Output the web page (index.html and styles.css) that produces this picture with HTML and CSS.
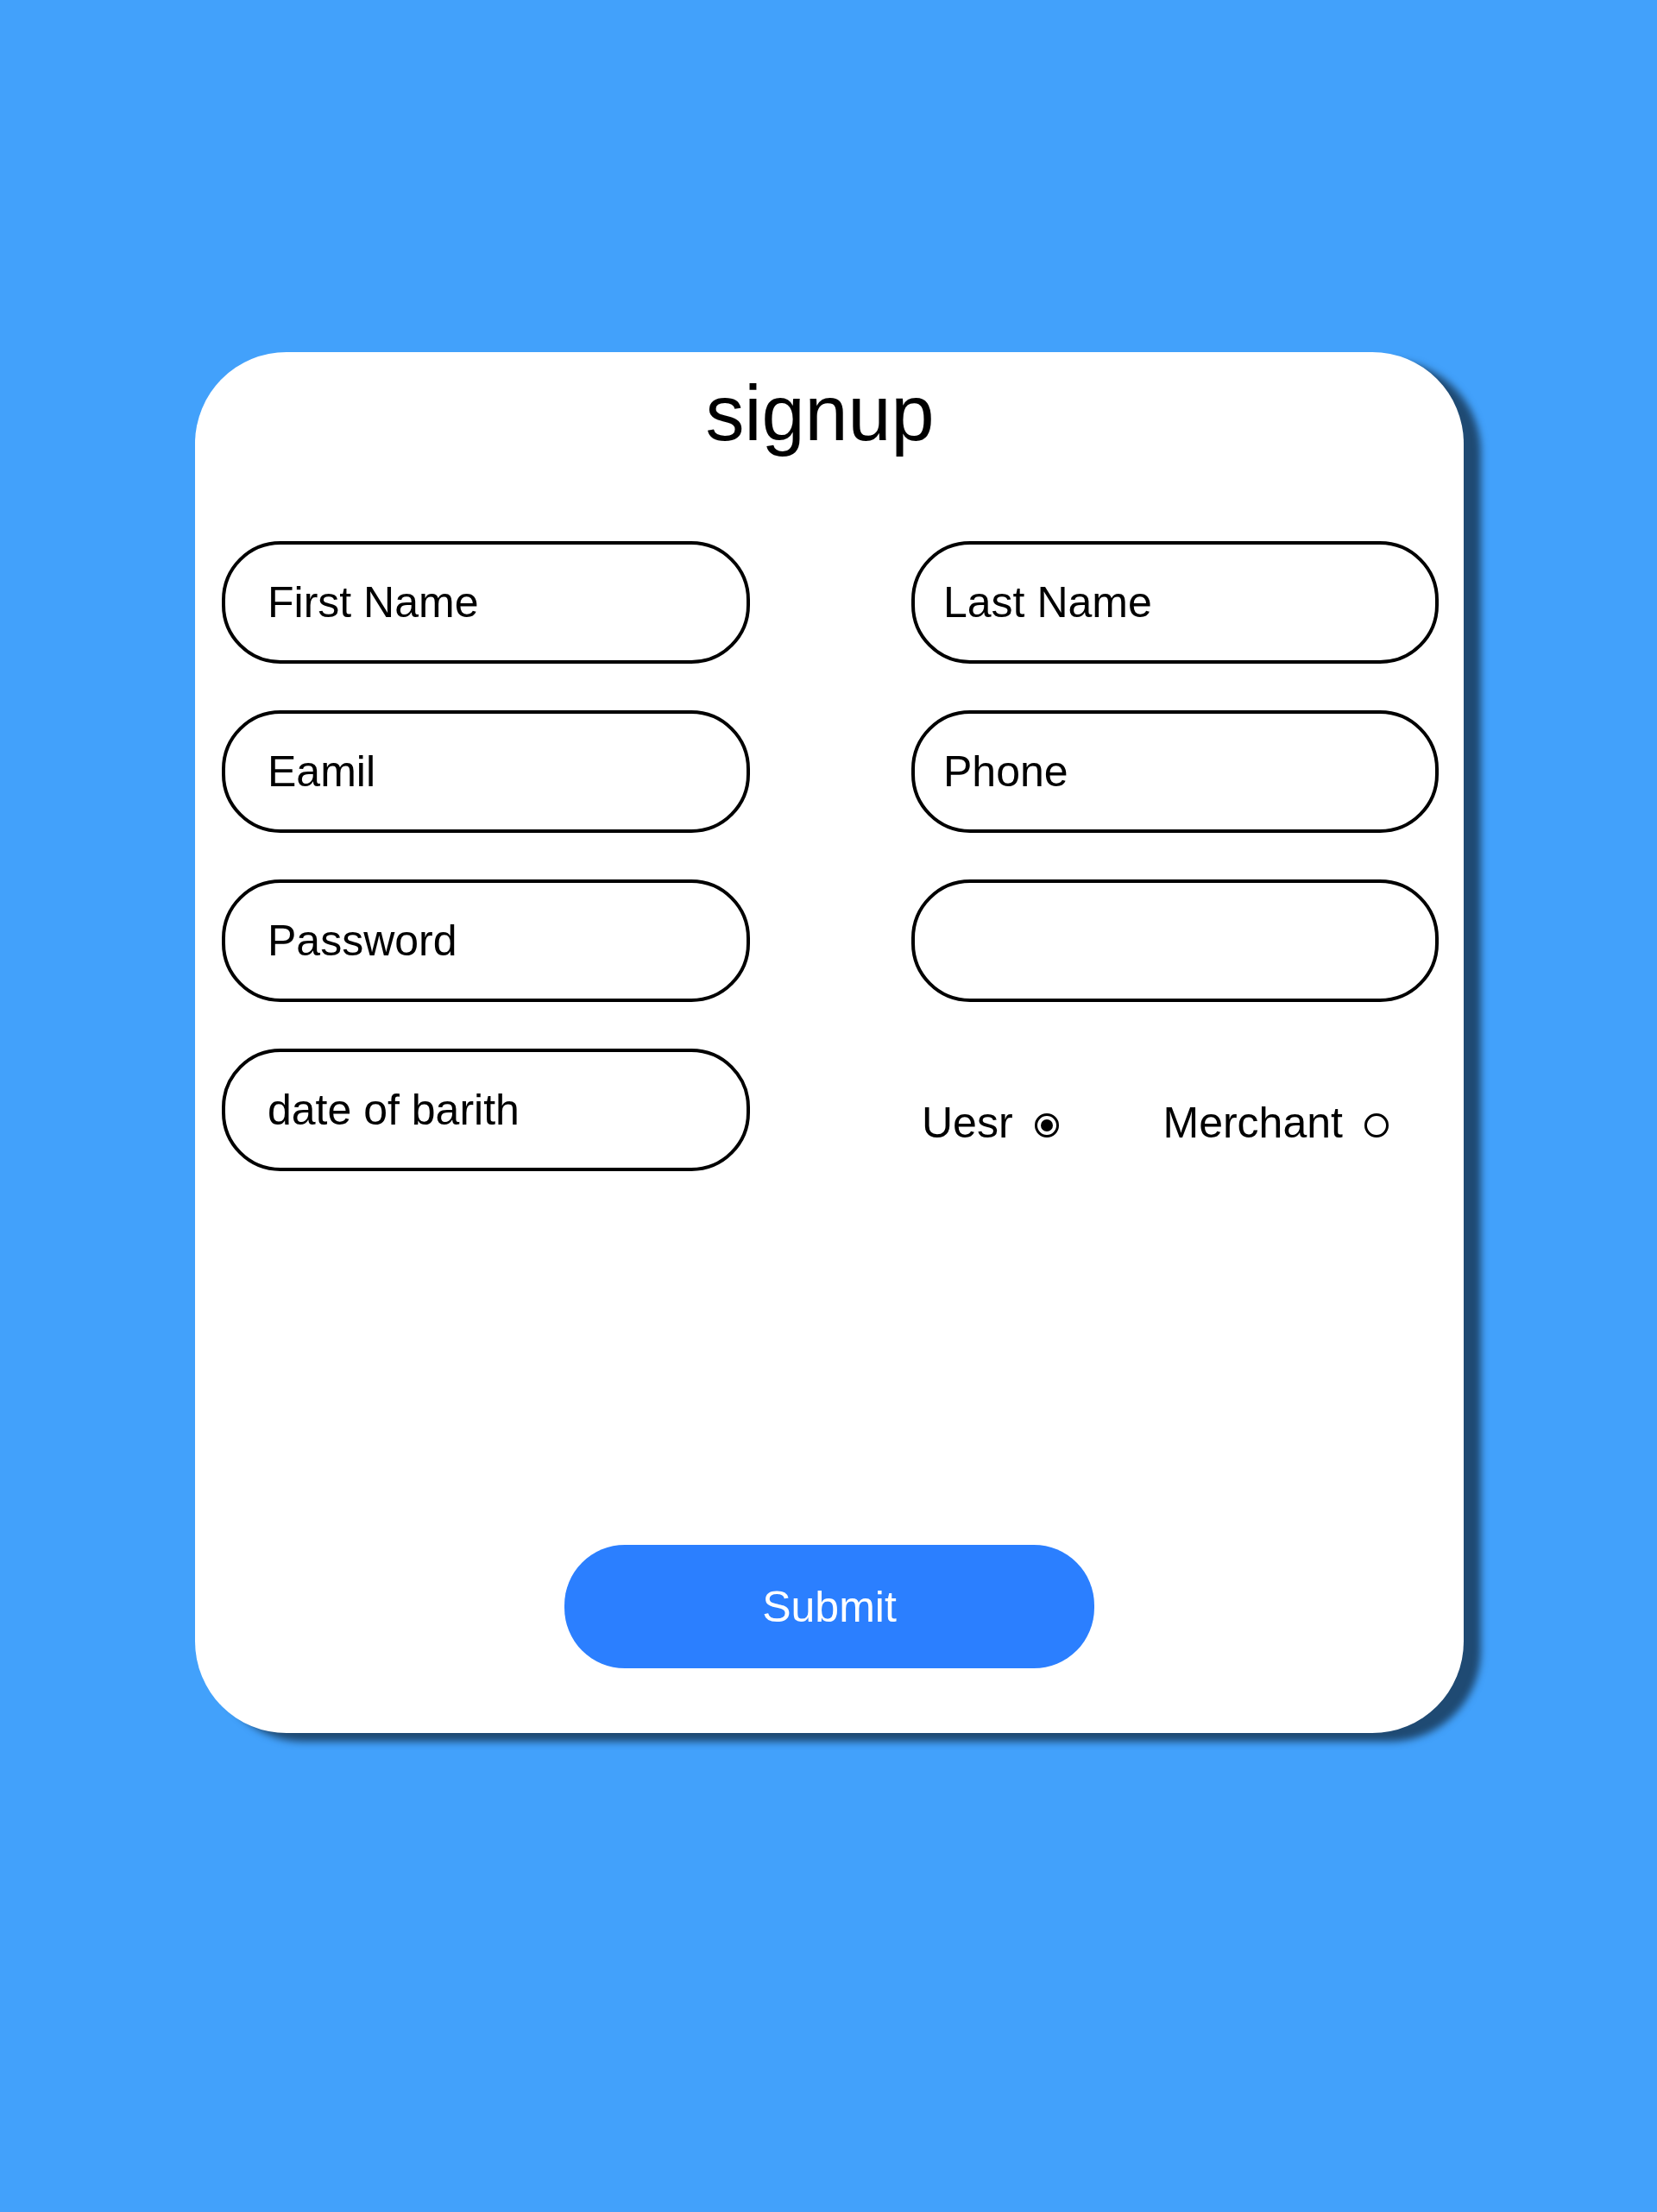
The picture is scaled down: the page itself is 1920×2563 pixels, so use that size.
FILE: index.html
```html
<!DOCTYPE html>
<html lang="en">
<head>
<meta charset="utf-8">
<title>signup</title>
<link rel="stylesheet" href="styles.css">
</head>
<body>
<main class="page">
  <form class="card">
    <h1 class="title">signup</h1>
    <div class="grid">
      <div class="field field-left">First Name</div>
      <div class="field field-right">Last Name</div>
      <div class="field field-left">Eamil</div>
      <div class="field field-right">Phone</div>
      <div class="field field-left">Password</div>
      <div class="field field-right"></div>
      <div class="field field-left">date of barith</div>
      <div class="roles">
        <label class="role role-user">Uesr<span class="radio checked"></span></label>
        <label class="role role-merchant">Merchant<span class="radio"></span></label>
      </div>
    </div>
    <div class="actions">
      <button type="button" class="submit">Submit</button>
    </div>
  </form>
</main>
</body>
</html>
```
FILE: styles.css
```css
html, body {
  margin: 0;
  padding: 0;
}
body {
  background: #42a1fb;
  width: 1920px;
  height: 2563px;
  font-family: "Liberation Sans", Arial, sans-serif;
  color: #000;
  overflow: hidden;
}
.page {
  padding-top: 408px;
  padding-left: 226px;
}
.card {
  box-sizing: border-box;
  width: 1470px;
  height: 1600px;
  background: #fff;
  border-radius: 106px;
  box-shadow: 20px 10px 8px #1f4a73;
  padding: 21px 0 0 31px;
}
.title {
  margin: 0;
  font-size: 90px;
  font-weight: normal;
  line-height: 100px;
  text-align: center;
  padding-right: 53px;
}
.grid {
  margin-top: 98px;
  display: grid;
  grid-template-columns: 612px 611px;
  column-gap: 187px;
  row-gap: 54px;
}
.field {
  box-sizing: border-box;
  height: 142px;
  border: 4px solid #000;
  border-radius: 68px;
  font-size: 50px;
  line-height: 134px;
  white-space: nowrap;
}
.field-left {
  padding-left: 49px;
}
.field-right {
  padding-left: 33px;
}
.roles {
  padding-top: 56px;
  padding-left: 12px;
  font-size: 50px;
  line-height: 60px;
  white-space: nowrap;
}
.role {
  display: inline-block;
}
.role-merchant {
  margin-left: 107px;
}
.radio {
  display: inline-block;
  box-sizing: border-box;
  width: 28px;
  height: 28px;
  margin-left: 25px;
  border: 3px solid #000;
  border-radius: 50%;
  vertical-align: baseline;
  position: relative;
}
.radio.checked::after {
  content: "";
  position: absolute;
  left: 4px;
  top: 4px;
  width: 14px;
  height: 14px;
  border-radius: 50%;
  background: #000;
}
.actions {
  margin-top: 433px;
  padding-right: 31px;
  display: flex;
  justify-content: center;
}
.submit {
  width: 614px;
  height: 143px;
  border: none;
  border-radius: 70px;
  background: #2b7fff;
  color: #fff;
  font-family: "Liberation Sans", Arial, sans-serif;
  font-size: 50px;
  padding: 0;
  cursor: pointer;
}
```
